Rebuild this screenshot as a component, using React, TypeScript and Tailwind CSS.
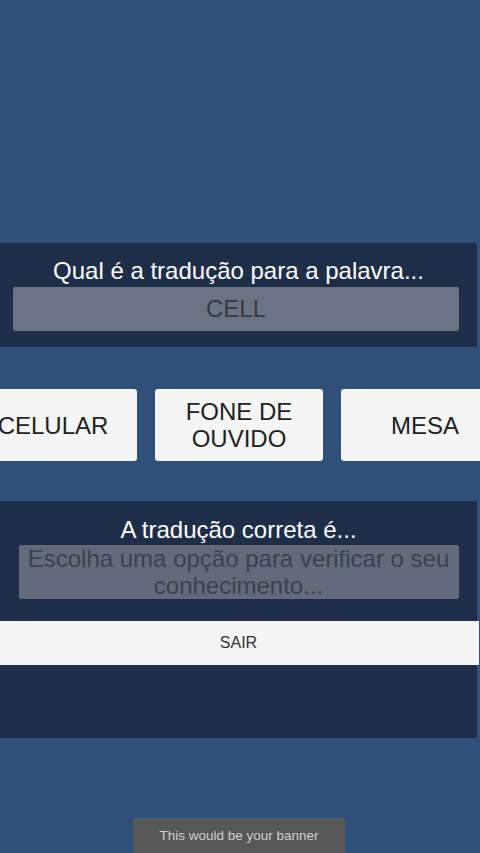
export default function App() {
  const options = ["CELULAR", "FONE DE OUVIDO", "MESA"];

  return (
    <div className="relative h-[853px] w-[480px] overflow-hidden bg-[#2f5079] font-['Liberation_Sans',Arial,sans-serif]">
      <div className="h-[243px]" />

      {/* question panel */}
      <section className="mr-[3px] flex h-[104px] flex-col items-center bg-[#1e2e49] pt-[13px]">
        <h1 className="text-[24px] leading-[30px] text-white">Qual é a tradução para a palavra...</h1>
        <div className="mt-[1px] ml-[13px] flex h-[44px] w-[446px] items-center justify-center self-start rounded-[2px] bg-[#6b7282] text-[24px] text-[#333a47]">
          CELL
        </div>
      </section>

      {/* answer options */}
      <div className="-ml-[2px] mt-[42px] flex justify-center gap-[18px]">
        {options.map((o) => (
          <button
            key={o}
            className="flex h-[72px] w-[168px] shrink-0 items-center justify-center rounded-[3px] bg-[#f5f5f5] px-6 text-center text-[24px] leading-[27px] text-[#222]"
          >
            {o}
          </button>
        ))}
      </div>

      {/* result panel */}
      <section className="mr-[3px] mt-[40px] flex h-[237px] flex-col items-center bg-[#1e2e49] pt-[14px]">
        <h2 className="text-[24px] leading-[30px] text-white">A tradução correta é...</h2>
        <div className="flex h-[54px] w-[440px] flex-col items-center justify-center rounded-[2px] bg-[#636a79] text-center text-[24px] leading-[27px] text-[#3a4150]">
          Escolha uma opção para verificar o seu conhecimento...
        </div>
        <button className="mt-[22px] h-[44px] w-[480px] bg-[#f5f5f5] text-[16px] text-[#333]">SAIR</button>
      </section>

      {/* ad banner */}
      <div className="absolute bottom-0 left-[133px] flex h-[35px] w-[212px] items-center justify-center rounded-t-[2px] border-t border-[#4a5a78] bg-[#575757] text-[13.5px] text-[#d0d0d0]">
        This would be your banner
      </div>
    </div>
  );
}
